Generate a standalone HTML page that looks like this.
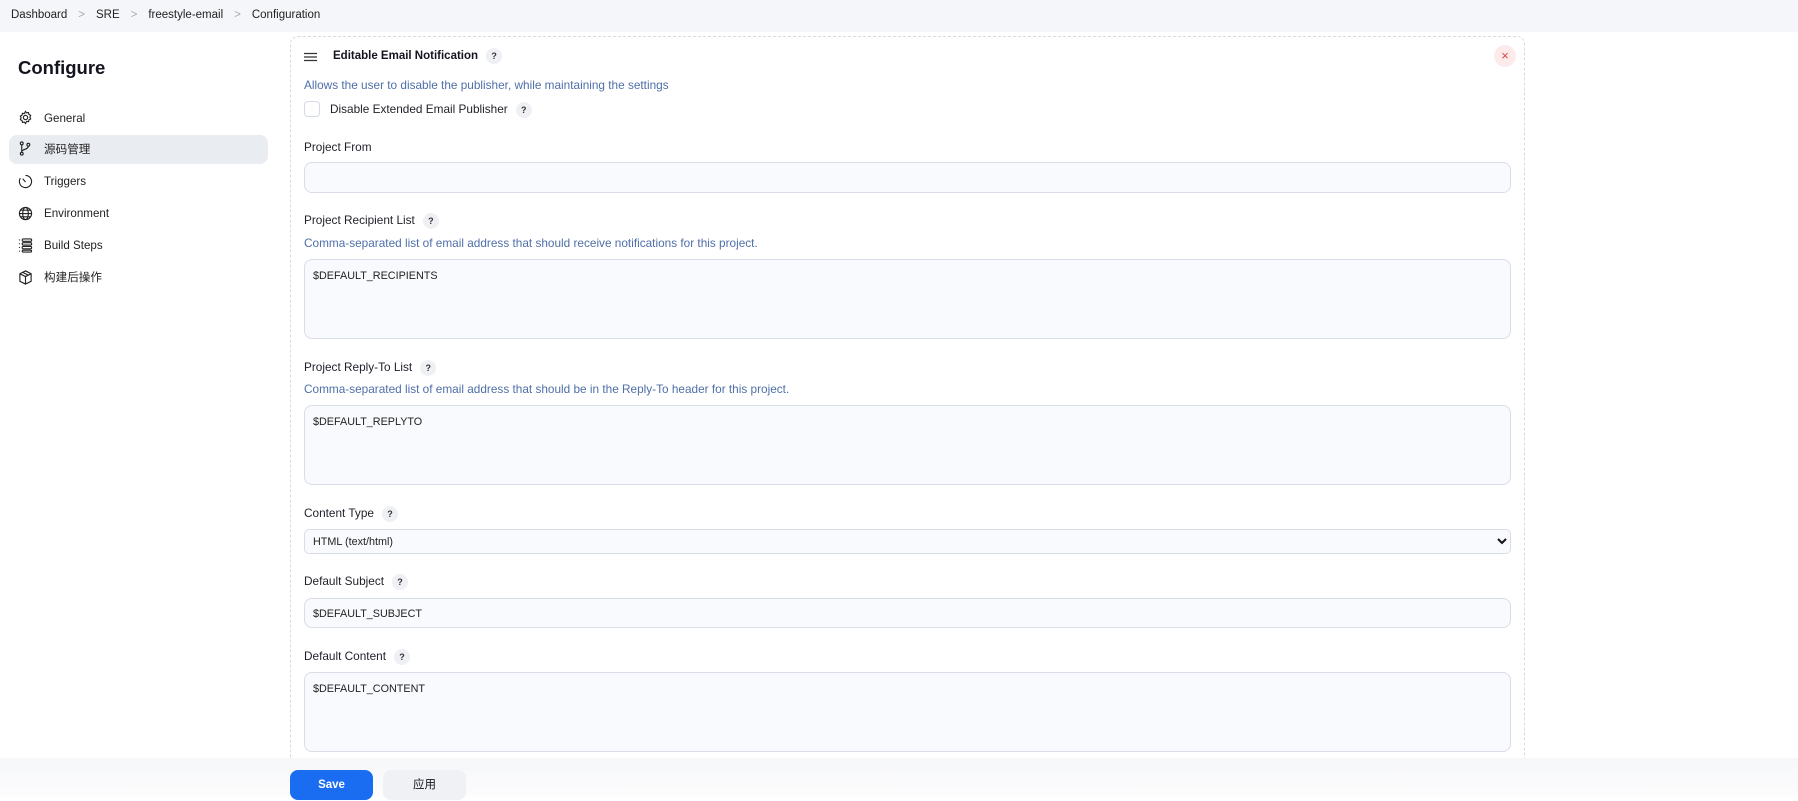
<!DOCTYPE html>
<html><head><meta charset="utf-8"><style>
*{box-sizing:border-box;margin:0;padding:0}
body{width:1798px;height:797px;overflow:hidden;background:#fff;font-family:"Liberation Sans","Noto Sans CJK SC",sans-serif;color:#14141f;position:relative;font-size:13px}
.a{position:absolute;white-space:nowrap}
.bc{left:0;top:0;width:1798px;height:32px;background:#f5f6f9}
.lbl{font-size:11.8px;color:#1f1f2a;line-height:16px}
.desc{font-size:11.8px;color:#4f6fa8}
.q{display:inline-block;width:16px;height:16px;border-radius:50%;background:#eef0f4;font-size:9px;font-weight:bold;text-align:center;line-height:16px;margin-left:8px;vertical-align:middle;color:#333}
.inp{background:#f9fafd;border:1.5px solid #d9dde8;border-radius:8px;left:304px;width:1207px}
.val{font-size:10.8px;color:#222;padding:10px 0 0 8px}
.nav{font-size:11.6px;color:#222;line-height:16px}
svg{position:absolute}
</style></head><body>
<div class="a bc"></div>
<div class="a" style="left:11px;top:9px;font-size:11.5px;color:#222">Dashboard<span style="color:#aaa;margin:0 11px">&gt;</span>SRE<span style="color:#aaa;margin:0 11px">&gt;</span>freestyle-email<span style="color:#aaa;margin:0 11px">&gt;</span>Configuration</div>

<div class="a" style="left:18px;top:57px;font-size:18.5px;font-weight:bold">Configure</div>
<div class="a" style="left:9px;top:135px;width:259px;height:29px;background:#e9ecf1;border-radius:8px"></div>
<svg style="left:18px;top:110px" width="15" height="15" viewBox="0 0 16 16" fill="none" stroke="#222" stroke-width="1.2"><circle cx="8" cy="8" r="2.3"/><path d="M8 1.5l1.2 1.6 2-.4.5 2 1.8 1-.8 1.9.8 1.9-1.8 1-.5 2-2-.4L8 14.5l-1.2-1.6-2 .4-.5-2-1.8-1 .8-1.9-.8-1.9 1.8-1 .5-2 2 .4z"/></svg>
<div class="a nav" style="left:44px;top:111px">General</div>
<svg style="left:18px;top:141px" width="15" height="15" viewBox="0 0 16 16" fill="none" stroke="#222" stroke-width="1.2"><circle cx="4" cy="2.5" r="1.5"/><circle cx="4" cy="13.5" r="1.5"/><circle cx="11" cy="4" r="1.5"/><path d="M4 4v8M11 5.5c0 4-7 3-7 6"/></svg>
<div class="a nav" style="left:44px;top:142px">源码管理</div>
<svg style="left:18px;top:174px" width="15" height="15" viewBox="0 0 16 16" fill="none" stroke="#222" stroke-width="1.2"><path d="M8 1.5a6.5 6.5 0 1 1-5.5 3"/><path d="M5 5l3 3.5"/></svg>
<div class="a nav" style="left:44px;top:174px">Triggers</div>
<svg style="left:18px;top:206px" width="15" height="15" viewBox="0 0 16 16" fill="none" stroke="#222" stroke-width="1.2"><circle cx="8" cy="8" r="6.5"/><ellipse cx="8" cy="8" rx="3" ry="6.5"/><path d="M1.5 8h13M2.5 4.5h11M2.5 11.5h11"/></svg>
<div class="a nav" style="left:44px;top:206px">Environment</div>
<svg style="left:18px;top:238px" width="15" height="15" viewBox="0 0 16 16" fill="none" stroke="#222" stroke-width="1.2"><path d="M1 2h1M1 6h1M1 10h1M1 14h1"/><rect x="4.5" y="1" width="10" height="2.5" rx="1"/><rect x="4.5" y="5" width="10" height="2.5" rx="1"/><rect x="4.5" y="9" width="10" height="2.5" rx="1"/><rect x="4.5" y="13" width="10" height="2" rx="1"/></svg>
<div class="a nav" style="left:44px;top:238px">Build Steps</div>
<svg style="left:18px;top:270px" width="15" height="15" viewBox="0 0 16 16" fill="none" stroke="#222" stroke-width="1.2"><path d="M8 1l6 3v8l-6 3-6-3V4z M2 4l6 3 6-3M8 7v8M5 2.5l6 3"/></svg>
<div class="a nav" style="left:44px;top:270px">构建后操作</div>

<div class="a" style="left:290px;top:36px;width:1235px;height:740px;border:1.2px dashed #d5dae3;border-radius:8px"></div>
<svg style="left:304px;top:52px" width="13" height="10" viewBox="0 0 13 10" stroke="#333" stroke-width="1.3"><path d="M0 1.5h13M0 5h13M0 8.5h13"/></svg>
<div class="a" style="left:333px;top:48px;font-size:11.5px;font-weight:bold;line-height:16px">Editable Email Notification<span class="q">?</span></div>
<div class="a" style="left:1494px;top:45px;width:22px;height:22px;border-radius:50%;background:#fdeaea;color:#e04444;text-align:center;line-height:21px;font-size:13px">×</div>
<div class="a desc" style="left:304px;top:78px">Allows the user to disable the publisher, while maintaining the settings</div>
<div class="a" style="left:304px;top:101px;width:16px;height:16px;border:1.5px solid #d5dae3;border-radius:4px"></div>
<div class="a lbl" style="left:330px;top:101px">Disable Extended Email Publisher<span class="q">?</span></div>

<div class="a lbl" style="left:304px;top:139px">Project From</div>
<div class="a inp" style="top:162px;height:31px"></div>

<div class="a lbl" style="left:304px;top:212px">Project Recipient List<span class="q">?</span></div>
<div class="a desc" style="left:304px;top:236px">Comma-separated list of email address that should receive notifications for this project.</div>
<div class="a inp" style="top:259px;height:80px"><div class="val">$DEFAULT_RECIPIENTS</div></div>

<div class="a lbl" style="left:304px;top:359px">Project Reply-To List<span class="q">?</span></div>
<div class="a desc" style="left:304px;top:382px">Comma-separated list of email address that should be in the Reply-To header for this project.</div>
<div class="a inp" style="top:405px;height:80px"><div class="val">$DEFAULT_REPLYTO</div></div>

<div class="a lbl" style="left:304px;top:505px">Content Type<span class="q">?</span></div>
<div class="a inp" style="top:529px;height:25px;border-radius:5px"><div class="val" style="padding-top:6px">HTML (text/html)</div></div>
<svg style="left:1497px;top:537px" width="10" height="8" viewBox="0 0 10 8"><path d="M1 2l4 4 4-4" stroke="#111" stroke-width="2" fill="none"/></svg>

<div class="a lbl" style="left:304px;top:573px">Default Subject<span class="q">?</span></div>
<div class="a inp" style="top:598px;height:30px"><div class="val" style="padding-top:9px">$DEFAULT_SUBJECT</div></div>

<div class="a lbl" style="left:304px;top:648px">Default Content<span class="q">?</span></div>
<div class="a inp" style="top:672px;height:80px"><div class="val">$DEFAULT_CONTENT</div></div>

<div class="a" style="left:0;top:758px;width:1798px;height:39px;background:linear-gradient(#f6f7f9,#fcfcfd)"></div>
<div class="a" style="left:290px;top:770px;width:83px;height:30px;background:#1a6cf0;border-radius:8px;color:#fff;font-weight:bold;font-size:11.5px;text-align:center;line-height:31px">Save</div>
<div class="a" style="left:383px;top:770px;width:83px;height:30px;background:#f0f1f4;border-radius:8px;font-size:11.5px;text-align:center;line-height:31px">应用</div>
</body></html>
